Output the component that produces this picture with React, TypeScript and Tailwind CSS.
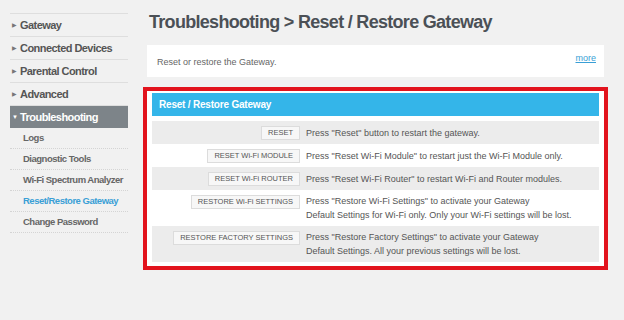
const mainNav = ["Gateway", "Connected Devices", "Parental Control", "Advanced"];
const subNav = ["Logs", "Diagnostic Tools", "Wi-Fi Spectrum Analyzer", "Reset/Restore Gateway", "Change Password"];

const rows = [
  { btn: "RESET", text: ['Press "Reset" button to restart the gateway.'] },
  { btn: "RESET Wi-Fi MODULE", text: ['Press "Reset Wi-Fi Module" to restart just the Wi-Fi Module only.'] },
  { btn: "RESET Wi-Fi ROUTER", text: ['Press "Reset Wi-Fi Router" to restart Wi-Fi and Router modules.'] },
  {
    btn: "RESTORE Wi-Fi SETTINGS",
    text: ['Press "Restore Wi-Fi Settings" to activate your Gateway', "Default Settings for Wi-Fi only. Only your Wi-Fi settings will be lost."],
  },
  {
    btn: "RESTORE FACTORY SETTINGS",
    text: ['Press "Restore Factory Settings" to activate your Gateway', "Default Settings. All your previous settings will be lost."],
  },
];

export default function App() {
  return (
    <div className="w-[624px] h-[320px] bg-[#f1f1f1] flex font-['Liberation_Sans',Arial,sans-serif] text-[#555]">
      {/* sidebar */}
      <div className="ml-[10px] mt-[13px] w-[118px] flex flex-col">
        <div className="border-t border-[#dedede]" />
        {mainNav.map((n) => (
          <div key={n} className="h-[23px] flex items-center border-b border-[#dedede] pl-[2px]">
            <span className="text-[6px] text-[#777] w-[8px]">▶</span>
            <span className="text-[11px] font-bold tracking-[-0.55px] text-[#555] whitespace-nowrap">{n}</span>
          </div>
        ))}
        <div className="h-[22px] flex items-center bg-[#7d8489] pl-[2px]">
          <span className="text-[6px] text-white w-[8px]">▼</span>
          <span className="text-[11px] font-bold tracking-[-0.55px] text-white">Troubleshooting</span>
        </div>
        {subNav.map((n) => (
          <div key={n} className="h-[21px] flex items-center border-b border-dotted border-[#d4d4d4] pl-[13px]">
            <span
              className={
                n === "Reset/Restore Gateway"
                  ? "text-[9.5px] font-bold tracking-[-0.5px] text-[#3a9fd6] whitespace-nowrap"
                  : "text-[9.5px] font-bold tracking-[-0.5px] text-[#666] whitespace-nowrap"
              }
            >
              {n}
            </span>
          </div>
        ))}
      </div>

      {/* main */}
      <div className="ml-[15px] w-[465px] pt-[10px] flex flex-col">
        <h1 className="h-[24px] leading-[24px] pl-[6px] text-[18px] font-bold tracking-[-0.7px] text-[#4b5056]">
          Troubleshooting &gt; Reset / Restore Gateway
        </h1>
        <div className="mt-[11px] mx-[4px] h-[32px] bg-white flex justify-between pl-[10px] pr-[8px]">
          <span className="text-[9px] text-[#666] mt-[11px]">Reset or restore the Gateway.</span>
          <span className="text-[9px] text-[#3a9fd6] underline mt-[7px]">more</span>
        </div>

        <div className="mt-[10px] border-4 border-[#e2131d] bg-white px-[5px] pt-[2px] pb-[4px]">
          <div className="h-[23px] bg-[#34b5e9] flex items-center pl-[7px] text-[10px] font-bold tracking-[-0.2px] text-white">
            Reset / Restore Gateway
          </div>
          <div className="mt-[5px] flex flex-col">
            {rows.map((r, i) => (
              <div
                key={r.btn}
                className={
                  (i % 2 === 0 ? "bg-[#ececec] " : "bg-white ") +
                  (r.text.length > 1 ? "py-[4px] " : "h-[23px] items-center ") +
                  "flex"
                }
              >
                <div className={"w-[148px] flex justify-end " + (r.text.length > 1 ? "pt-[1px]" : "")}>
                  <span className="h-[14px] flex items-center px-[6px] bg-[#f7f7f7] border border-[#dcdcdc] text-[7.5px] text-[#555] whitespace-nowrap">
                    {r.btn}
                  </span>
                </div>
                <div className="ml-[6px] flex flex-col text-[9px] leading-[14px] text-[#555]">
                  {r.text.map((t) => (
                    <span key={t} className="whitespace-nowrap">{t}</span>
                  ))}
                </div>
              </div>
            ))}
          </div>
        </div>
      </div>
    </div>
  );
}
